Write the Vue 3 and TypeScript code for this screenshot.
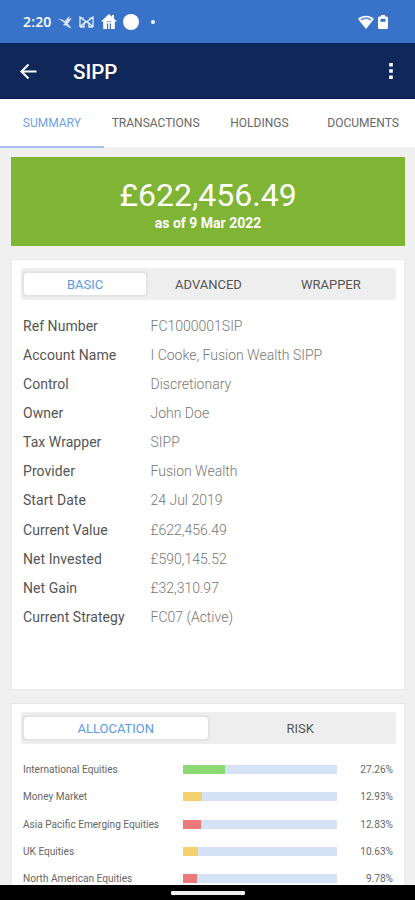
<script setup lang="ts">
import { ref } from 'vue'

interface Detail { label: string; value: string }
interface Allocation { name: string; percent: string; fill: number; tone: string }

const tabs: string[] = ['Summary', 'Transactions', 'Holdings', 'Documents']
const activeTab = ref('Summary')
const views: string[] = ['Basic', 'Advanced', 'Wrapper']
const activeView = ref('Basic')
const charts: string[] = ['Allocation', 'Risk']
const activeChart = ref('Allocation')

const details: Detail[] = [
  { label: 'Ref Number', value: 'FC1000001SIP' },
  { label: 'Account Name', value: 'I Cooke, Fusion Wealth SIPP' },
  { label: 'Control', value: 'Discretionary' },
  { label: 'Owner', value: 'John Doe' },
  { label: 'Tax Wrapper', value: 'SIPP' },
  { label: 'Provider', value: 'Fusion Wealth' },
  { label: 'Start Date', value: '24 Jul 2019' },
  { label: 'Current Value', value: '£622,456.49' },
  { label: 'Net Invested', value: '£590,145.52' },
  { label: 'Net Gain', value: '£32,310.97' },
  { label: 'Current Strategy', value: 'FC07 (Active)' },
]

const allocations: Allocation[] = [
  { name: 'International Equities', percent: '27.26%', fill: 27.26, tone: 'green' },
  { name: 'Money Market', percent: '12.93%', fill: 12.2, tone: 'amber' },
  { name: 'Asia Pacific Emerging Equities', percent: '12.83%', fill: 12, tone: 'red' },
  { name: 'UK Equities', percent: '10.63%', fill: 10, tone: 'amber' },
  { name: 'North American Equities', percent: '9.78%', fill: 9, tone: 'red' },
]
</script>

<template>
  <div class="screen">
    <header class="status">
      <span class="clock">2:20</span>
      <svg class="s-bird" viewBox="0 0 14 14"><path d="M0 4c2.500-.3 4.500.3 6.500 2.200L11.500.8 10.600 4.200 13.800 2.600 11.300 7l-1.600 1.600 3.800 4.600C11 12.800 9.500 11.800 8.300 10.800L4.800 10 6.800 8.400C5.200 6.800 3 5.400 0 4z" fill="#d9e5f7" /></svg>
      <svg class="s-mail" viewBox="0 0 15 12"><path d="M1 11V1l6.500 5L14 1v10M1 11l4-4v4H1M14 11l-4-4v4h4M4 1.500v3M11 1.500v3M4.500 8l3-2.200 3 2.200" fill="none" stroke="#e7effb" stroke-width="1.300" /></svg>
      <svg class="s-home" viewBox="0 0 16 15"><path d="M8 0 0 7.500h2.200V15H6V9.500h1.200V15h1.600V9.500H10V15h3.800V7.500H16L13 4.700V1h-2v1.800z" fill="#fff" /><path d="M5.500 7.600h5" stroke="#83abe2" /></svg>
      <span class="s-disc"></span>
      <span class="s-dot"></span>
      <svg class="s-wifi" viewBox="0 0 16 14"><path d="M0 4C4.600-.4 11.400-.4 16 4L8 14z" fill="#fff" /><path d="M2.800 4.900C6 2.700 10 2.700 13.200 4.900" fill="none" stroke="#5f92d9" stroke-width="1.500" /></svg>
      <svg class="s-batt" viewBox="0 0 10 14"><path d="M3 0h4v1.500h1.500Q10 1.500 10 3v9.500Q10 14 8.500 14h-7Q0 14 0 12.500V3Q0 1.500 1.500 1.500H3z" fill="#fff" /><path d="M2.500 3.800h5v3h-5z" fill="#3973c9" /></svg>
    </header>

    <div class="appbar">
      <svg class="back" viewBox="0 0 18 18"><path d="M17.500 9H1.500M9 1.500 1.500 9 9 16.500" fill="none" stroke="#fff" stroke-width="2.200" /></svg>
      <h1>SIPP</h1>
      <svg class="more" viewBox="0 0 4 16"><path d="M.2 0h3.600v3.600H.2zM.2 6.200h3.600v3.600H.2zM.2 12.400h3.600V16H.2z" fill="#fff" /></svg>
    </div>

    <nav class="tabs">
      <button v-for="tab in tabs" :key="tab" :class="{ active: tab === activeTab }" @click="activeTab = tab">{{ tab }}</button>
    </nav>

    <main>
      <section class="hero">
        <div class="amount">£622,456.49</div>
        <div class="date">as of 9 Mar 2022</div>
      </section>

      <section class="card details">
        <div class="segment">
          <button v-for="view in views" :key="view" :class="{ active: view === activeView }" @click="activeView = view">{{ view }}</button>
        </div>
        <dl>
          <div v-for="item in details" :key="item.label" class="row">
            <dt>{{ item.label }}</dt>
            <dd>{{ item.value }}</dd>
          </div>
        </dl>
      </section>

      <section class="card allocation">
        <div class="segment">
          <button v-for="chart in charts" :key="chart" :class="{ active: chart === activeChart }" @click="activeChart = chart">{{ chart }}</button>
        </div>
        <div class="bars">
          <div v-for="item in allocations" :key="item.name" class="bar-row">
            <span class="name">{{ item.name }}</span>
            <span class="track"><span class="fill" :class="item.tone" :style="{ width: item.fill + '%' }"></span></span>
            <span class="pct">{{ item.percent }}</span>
          </div>
        </div>
      </section>
    </main>

    <footer class="navbar"><span></span></footer>
  </div>
</template>

<style>
body { overflow: hidden; background: #f0f0f0; }
</style>

<style scoped>
* { box-sizing: border-box; }
.screen { width: 415px; height: 900px; display: flex; flex-direction: column; overflow: hidden; background: #f0f0f0; color: #444; font-family: Roboto, sans-serif; }
button { border: 0; padding: 0; margin: 0; background: none; font: inherit; letter-spacing: inherit; color: inherit; text-transform: uppercase; white-space: nowrap; }
svg { display: block; flex: none; }
.status { height: 43px; flex: none; display: flex; align-items: center; padding: 0 27px 0 23px; background: #3973c9; color: #fff; }
.clock { width: 35px; font-family: "Open Sans", sans-serif; font-weight: 600; font-size: 14px; letter-spacing: .15px; }
.s-bird { width: 14px; height: 14px; }
.s-mail { width: 15px; height: 12px; margin-left: 7px; }
.s-home { width: 16px; height: 15px; margin-left: 7px; }
.s-disc { width: 16px; height: 16px; margin-left: 6px; border-radius: 50%; background: #fff; }
.s-dot { width: 4px; height: 4px; margin-left: 12px; border-radius: 50%; background: #fff; }
.s-wifi { width: 16px; height: 14px; margin-left: auto; }
.s-batt { width: 10px; height: 14px; margin-left: 4px; }
.appbar { height: 56px; flex: none; display: flex; align-items: center; padding: 0 22px 0 20px; background: #0f2859; border-top: 1px solid #09205a; border-bottom: 1px solid #07134b; color: #fff; }
.back { width: 17px; height: 17px; }
h1 { margin: 1px 0 0 36px; font-size: 20.500px; font-weight: 500; line-height: 24px; }
.more { width: 4px; height: 16px; margin-left: auto; }
.tabs { height: 49px; flex: none; display: grid; grid-template-columns: repeat(4, 1fr); background: #fff; border-bottom: 1px solid #f0f0f0; color: #686868; font-size: 12px; }
.tabs button { height: 49px; border-bottom: 2px solid transparent; padding-top: 1px; }
.tabs .active { color: #70a1e8; border-bottom-color: #a9c0f0; }
main { flex: 1; min-height: 0; overflow: hidden; padding: 9px 10px 0 11px; display: flex; flex-direction: column; }
.hero { height: 89px; flex: none; background: #7fb435; color: #fff; text-align: center; padding-top: 19px; }
.amount { font-size: 32px; line-height: 39px; }
.date { font-size: 14px; line-height: 17px; font-weight: 700; }
.card { flex: none; background: #fff; border: 1px solid #e9e9e9; padding: 8px 8px 0 9px; }
.details { margin-top: 13px; height: 431px; }
.allocation { margin-top: 13px; height: 230px; }
.segment { height: 32px; display: flex; padding: 4px 4px 4px 2px; border-radius: 3px; background: #eee; font-size: 13px; color: #555; }
.segment button { flex: 1; padding-top: 1px; }
.segment .active { color: #5c9ae8; background: #fff; border-radius: 4px; border: 1px solid #e3e3e3; box-shadow: 0 0 2px #ccc; padding-top: 0; }
dl { margin: 11px 0 0 2px; }
.row { display: flex; align-items: center; height: 29.150px; font-size: 14px; }
dt { width: 127.500px; color: #555; letter-spacing: .05px; }
dd { margin: 0; color: #777; font-weight: 300; }
.bars { padding: 12px 3px 0 2px; }
.bar-row { display: flex; align-items: center; height: 27.300px; font-size: 10.100px; color: #666; }
.name { width: 160px; }
.track { width: 154px; height: 9px; background: #d5e2f6; }
.fill { display: block; height: 9px; }
.green { background: #8dda74; }
.amber { background: #f5d06f; }
.red { background: #ed7a7a; }
.pct { margin-left: auto; }
.navbar { height: 15px; flex: none; display: flex; justify-content: center; padding-top: 6px; background: #000; }
.navbar span { width: 74px; height: 4px; border-radius: 1px; background: #eee; }
</style>
